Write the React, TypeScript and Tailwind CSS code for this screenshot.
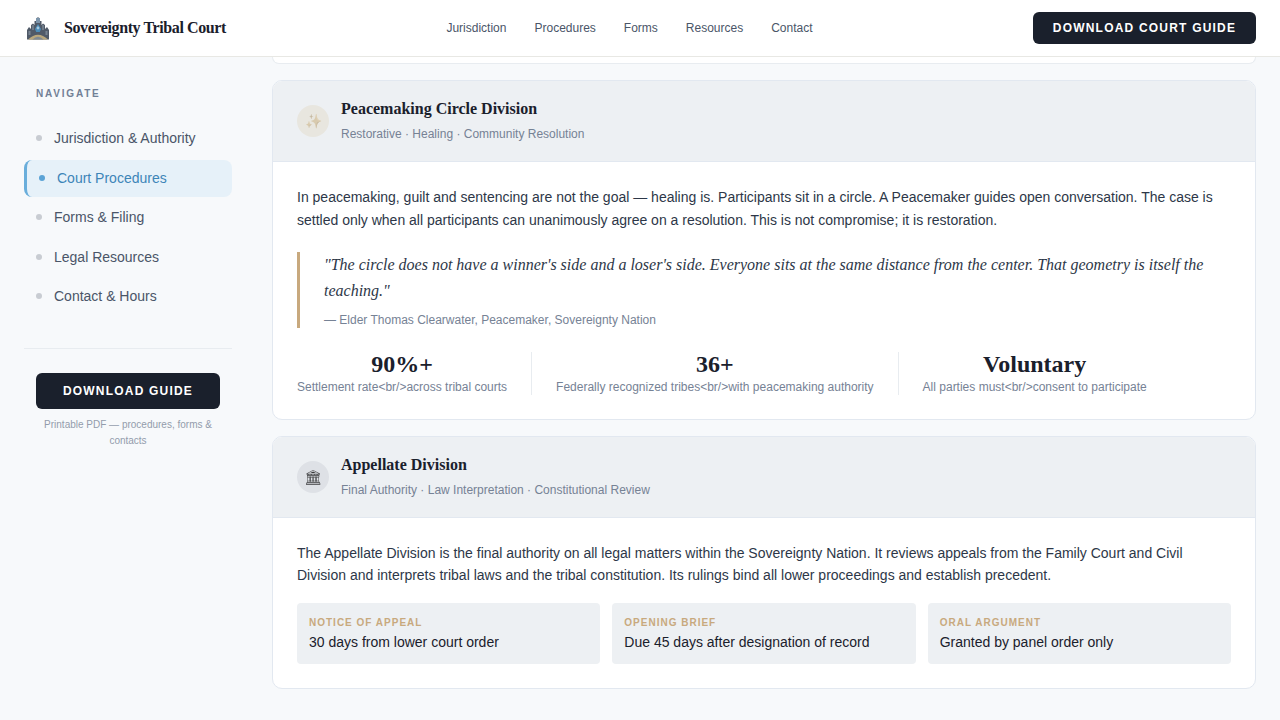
import React from 'react';

const navLinks = ['Jurisdiction', 'Procedures', 'Forms', 'Resources', 'Contact'];

const sideLinks = [
  { label: 'Jurisdiction & Authority' },
  { label: 'Court Procedures', active: true },
  { label: 'Forms & Filing' },
  { label: 'Legal Resources' },
  { label: 'Contact & Hours' },
];

const stats = [
  { value: '90%+', label: 'Settlement rate<br/>across tribal courts' },
  { value: '36+', label: 'Federally recognized tribes<br/>with peacemaking authority' },
  { value: 'Voluntary', label: 'All parties must<br/>consent to participate' },
];

const deadlines = [
  { label: 'NOTICE OF APPEAL', value: '30 days from lower court order' },
  { label: 'OPENING BRIEF', value: 'Due 45 days after designation of record' },
  { label: 'ORAL ARGUMENT', value: 'Granted by panel order only' },
];

const CourtLogo = () => (
  <svg width="24" height="24" viewBox="0 0 24 24" className="shrink-0">
    <path d="M1 14 L3 11 L5 13 V9 L7 7.5 L8.5 9 V5 L10 5 L11 1.5 H13 L14 5 L15.5 5 V9 L17 7.5 L19 9 V13 L21 11 L23 14 V23.5 H1 Z" fill="#505a68" />
    <rect x="10" y="2" width="4" height="5" fill="#7d95ab" />
    <rect x="6" y="9" width="2" height="5" fill="#6f7b88" />
    <rect x="16" y="9" width="2" height="5" fill="#6f7b88" />
    <rect x="2.5" y="15" width="2" height="4" fill="#788491" />
    <rect x="19.5" y="15" width="2" height="4" fill="#788491" />
    <path d="M9 13 L12 8 L15 13 L13.8 16 H10.2 Z" fill="#4b8cb8" />
    <circle cx="12" cy="12" r="1.4" fill="#a5c8de" />
    <path d="M2 23.5 Q12 14 22 23.5 Z" fill="#b9a77c" />
    <path d="M6.5 23.5 Q12 18 17.5 23.5 Z" fill="#7f8a94" />
  </svg>
);

const DivisionHeader = ({
  icon,
  title,
  sub,
  circle,
  iconStyle,
}: {
  icon: string;
  title: string;
  sub: string;
  circle: string;
  iconStyle: string;
}) => (
  <div className="flex items-center gap-3 h-[81px] px-6 bg-[#edf0f3] border-b border-[#e2e8f0]">
    <div className={`w-8 h-8 rounded-full flex items-center justify-center ${circle}`}>
      <span className={`text-sm leading-none ${iconStyle}`}>{icon}</span>
    </div>
    <div className="pb-0.5">
      <h2 className="font-['Liberation_Serif',serif] font-bold text-base leading-6 text-[#1a202c]">{title}</h2>
      <p className="mt-1 text-xs leading-[18px] text-[#768295]">{sub}</p>
    </div>
  </div>
);

export default function App() {
  return (
    <div className="h-[720px] overflow-hidden bg-[#f7f9fb] font-['Liberation_Sans',Arial,sans-serif]">
      <header className="h-[57px] bg-white border-b border-[#e8e8e4] flex items-center justify-between pl-[26px] pr-6">
        <div className="flex items-center gap-[14px]">
          <CourtLogo />
          <span className="font-['Liberation_Serif',serif] font-bold text-base tracking-tight text-[#1a202c]">
            Sovereignty Tribal Court
          </span>
        </div>
        <nav className="flex items-center gap-7">
          {navLinks.map((link) => (
            <a key={link} className="text-xs text-[#4a5568]">
              {link}
            </a>
          ))}
        </nav>
        <button className="h-8 w-[223px] rounded-md bg-[#1a202c] text-white text-xs font-bold tracking-[0.1em]">
          DOWNLOAD COURT GUIDE
        </button>
      </header>

      <div className="flex">
        <aside className="w-[248px] shrink-0 pl-6 pr-4 pt-[29px]">
          <div className="px-3 text-[10px] leading-[15px] font-bold tracking-[0.18em] text-[#718096]">NAVIGATE</div>
          <ul className="mt-[19px] flex flex-col gap-[2.5px]">
            {sideLinks.map((item) =>
              item.active ? (
                <li
                  key={item.label}
                  className="flex items-center gap-3 h-[37px] px-3 pb-px rounded-lg border-l-[3px] border-[#6aaedb] bg-[#e6f1f9] text-sm text-[#3d85b8]"
                >
                  <span className="w-1.5 h-1.5 rounded-full bg-[#5ba3d6]" />
                  {item.label}
                </li>
              ) : (
                <li key={item.label} className="flex items-center gap-3 h-[37px] px-3 pb-px text-sm text-[#4a5568]">
                  <span className="w-1.5 h-1.5 rounded-full bg-[#c8ccd2]" />
                  {item.label}
                </li>
              ),
            )}
          </ul>
          <div className="mt-[33px] pt-6 border-t border-[#e8ecf0] px-3">
            <button className="w-full h-9 rounded-md bg-[#1a202c] text-white text-xs font-bold tracking-[0.1em]">
              DOWNLOAD GUIDE
            </button>
            <p className="mt-2 text-[10px] leading-4 text-center text-[#939cab]">
              Printable PDF — procedures, forms & contacts
            </p>
          </div>
        </aside>

        <main className="flex-1 pl-6 pr-6">
          <div className="h-[7px] bg-white border border-t-0 border-[#e8ecf0] rounded-b-[10px]" />

          <section className="mt-4 bg-white border border-[#e2e8f0] rounded-[10px] overflow-hidden">
            <DivisionHeader
              icon="✨"
              title="Peacemaking Circle Division"
              sub="Restorative · Healing · Community Resolution"
              circle="bg-[#e8e6df]"
              iconStyle="brightness-75 sepia opacity-60"
            />
            <div className="px-6 pt-[24.4px]">
              <p className="text-sm leading-[22.4px] text-[#2d3748]">
                In peacemaking, guilt and sentencing are not the goal — healing is. Participants sit in a circle. A
                Peacemaker guides open conversation. The case is settled only when all participants can unanimously
                agree on a resolution. This is not compromise; it is restoration.
              </p>
              <blockquote className="mt-[20.8px] pl-6 border-l-[3px] border-[#c8a97e]">
                <p className="font-['Liberation_Serif',serif] italic text-base leading-[26px] text-[#2d3748]">
                  "The circle does not have a winner's side and a loser's side. Everyone sits at the same distance from
                  the center. That geometry is itself the teaching."
                </p>
                <cite className="block mt-2 not-italic text-xs leading-4 text-[#768295]">
                  — Elder Thomas Clearwater, Peacemaker, Sovereignty Nation
                </cite>
              </blockquote>
              <div className="mt-6 mb-6 flex">
                {stats.map((stat, i) => (
                  <div
                    key={stat.value}
                    className={
                      i === stats.length - 1
                        ? 'pl-6 text-center'
                        : i === 0
                          ? 'pr-6 text-center border-r border-[#e8ecf0]'
                          : 'px-6 text-center border-r border-[#e8ecf0]'
                    }
                  >
                    <div className="font-['Liberation_Serif',serif] font-bold text-2xl leading-6 text-[#1a202c]">
                      {stat.value}
                    </div>
                    <div className="mt-[3px] text-xs leading-4 text-[#768295]">{stat.label}</div>
                  </div>
                ))}
              </div>
            </div>
          </section>

          <section className="mt-4 bg-white border border-[#e2e8f0] rounded-[10px] overflow-hidden">
            <DivisionHeader
              icon="🏛"
              title="Appellate Division"
              sub="Final Authority · Law Interpretation · Constitutional Review"
              circle="bg-[#dee1e6]"
              iconStyle="grayscale opacity-75"
            />
            <div className="p-6">
              <p className="text-sm leading-[22.4px] text-[#2d3748]">
                The Appellate Division is the final authority on all legal matters within the Sovereignty Nation. It
                reviews appeals from the Family Court and Civil Division and interprets tribal laws and the tribal
                constitution. Its rulings bind all lower proceedings and establish precedent.
              </p>
              <div className="mt-4 grid grid-cols-3 gap-3">
                {deadlines.map((d) => (
                  <div key={d.label} className="h-[61px] px-3 pt-3 rounded-[4px] bg-[#edf0f3]">
                    <div className="text-[10px] leading-[15px] font-bold tracking-[0.1em] text-[#c8a97e]">{d.label}</div>
                    <div className="mt-0.5 text-sm leading-[21px] text-[#1a202c]">{d.value}</div>
                  </div>
                ))}
              </div>
            </div>
          </section>
        </main>
      </div>
    </div>
  );
}
